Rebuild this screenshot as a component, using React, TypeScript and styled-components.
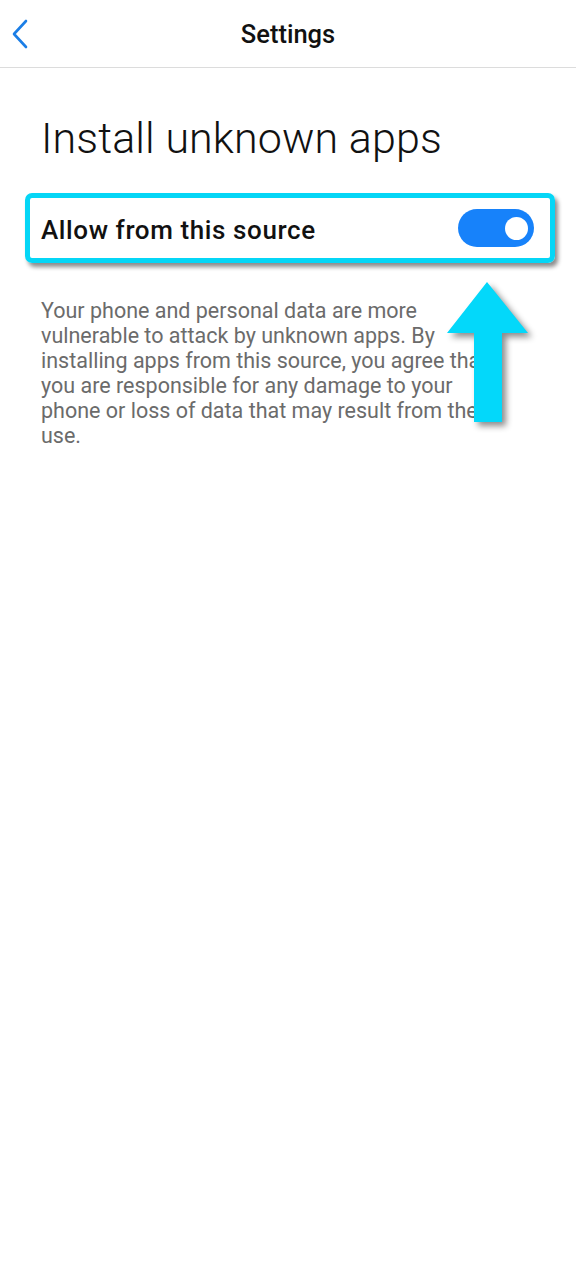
import React, { useState } from "react"
import styled, { createGlobalStyle } from "styled-components"

const GlobalStyle = createGlobalStyle`
  html, body {
    margin: 0;
    padding: 0;
    background: #ffffff;
    font-family: Roboto, "Noto Sans", sans-serif;
  }
`

const Page = styled.div`
  width: 576px;
  min-height: 1280px;
  background: #ffffff;
`

const Header = styled.header`
  position: relative;
  height: 67px;
  display: flex;
  align-items: center;
  justify-content: center;
  border-bottom: 1px solid #dcdcdc;
`

const BackButton = styled.button`
  position: absolute;
  left: 6px;
  top: 18px;
  width: 28px;
  height: 32px;
  padding: 0;
  border: none;
  background: none;
  display: flex;
  align-items: center;
  justify-content: center;
`

const HeaderTitle = styled.h1`
  margin: 0;
  font-size: 25.5px;
  font-weight: 500;
  color: #111111;
`

const Content = styled.main`
  position: relative;
  padding-top: 45px;
`

const PageTitle = styled.h2`
  margin: 0 0 0 41px;
  font-size: 43px;
  line-height: 50px;
  font-weight: 300;
  letter-spacing: 0.1px;
  color: #111111;
`

const Highlight = styled.div`
  margin: 30px 21px 0 25px;
  height: 70px;
  box-sizing: border-box;
  border: 5px solid #05d6f6;
  border-radius: 7px;
  box-shadow: 3px 4px 4px rgba(0, 0, 0, 0.45);
  display: flex;
  align-items: center;
  justify-content: space-between;
  padding: 0 16px 0 11px;
`

const RowLabel = styled.span`
  padding-top: 3px;
  font-size: 26px;
  font-weight: 500;
  letter-spacing: 0.6px;
  color: #111111;
`

const Toggle = styled.button<{ $on: boolean }>`
  width: 76px;
  height: 38px;
  border-radius: 19px;
  border: none;
  padding: 0;
  background: ${(p) => (p.$on ? "#1782fa" : "#c8c8c8")};
  display: flex;
  align-items: center;
  justify-content: ${(p) => (p.$on ? "flex-end" : "flex-start")};
  cursor: pointer;
`

const Knob = styled.span`
  width: 23px;
  height: 23px;
  border-radius: 50%;
  background: #ffffff;
  margin: 0 6px;
`

const Description = styled.p`
  margin: 35px 0 0 41px;
  font-size: 21.5px;
  line-height: 25px;
  color: #6b6b6b;
  white-space: nowrap;
`

const Arrow = styled.svg`
  position: absolute;
  left: 444px;
  top: 214px;
  filter: drop-shadow(4px 4px 3px rgba(0, 0, 0, 0.45));
`

const lines = [
  "Your phone and personal data are more",
  "vulnerable to attack by unknown apps. By",
  "installing apps from this source, you agree that",
  "you are responsible for any damage to your",
  "phone or loss of data that may result from their",
  "use.",
]

const App: React.FC = () => {
  const [on, setOn] = useState(true)

  return (
    <Page>
      <GlobalStyle />
      <Header>
        <BackButton aria-label="Back">
          <svg width="20" height="30" viewBox="0 0 20 30">
            <polyline
              points="16,2 4,15 16,28"
              fill="none"
              stroke="#1b7ee6"
              strokeWidth="2.6"
              strokeLinecap="round"
              strokeLinejoin="round"
            />
          </svg>
        </BackButton>
        <HeaderTitle>Settings</HeaderTitle>
      </Header>
      <Content>
        <PageTitle>Install unknown apps</PageTitle>
        <Highlight>
          <RowLabel>Allow from this source</RowLabel>
          <Toggle $on={on} onClick={() => setOn(!on)}>
            <Knob />
          </Toggle>
        </Highlight>
        <Description>
          {lines.map((l, i) => (
            <React.Fragment key={i}>
              {l}
              {i < lines.length - 1 && <br />}
            </React.Fragment>
          ))}
        </Description>
        <Arrow width="90" height="145" viewBox="0 0 90 145">
          <polygon
            points="43,0 84,51 58,51 58,140 30,140 30,51 3,51"
            fill="#03d8fa"
          />
        </Arrow>
      </Content>
    </Page>
  )
}

export default App
